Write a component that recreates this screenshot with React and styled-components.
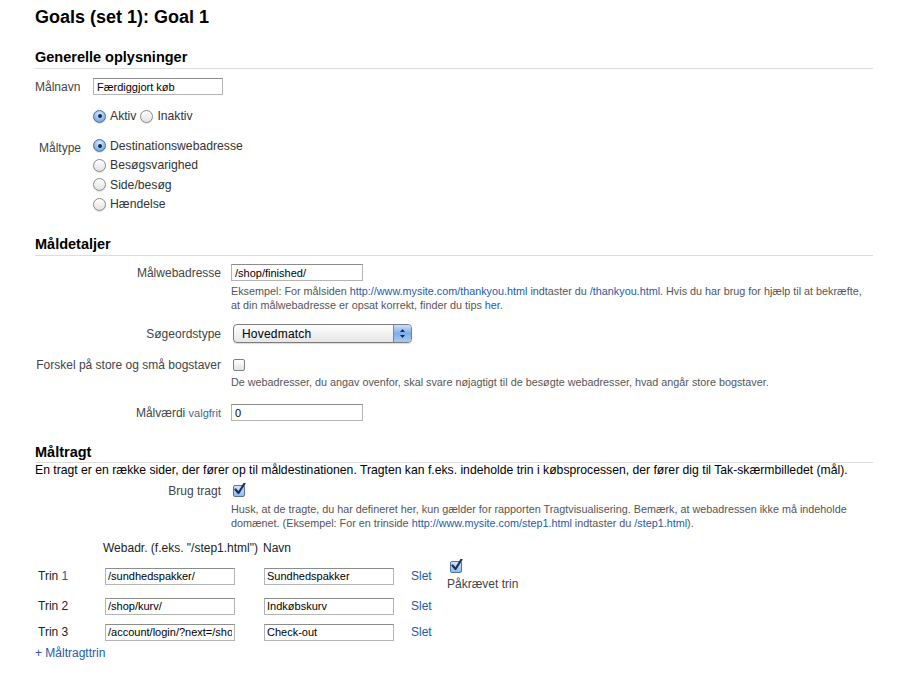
import React from "react";
import styled, { createGlobalStyle } from "styled-components";

const GlobalStyle = createGlobalStyle`
  body {
    margin: 0;
    background: #fff;
    font-family: "Liberation Sans", Arial, Helvetica, sans-serif;
    color: #333;
  }
`;

function Radio({ checked, children }) {
  return (
    <RadioItem>
      <RadioDot $checked={checked} />
      {children}
    </RadioItem>
  );
}

function CheckBox({ checked }) {
  return (
    <Box $checked={checked}>
      {checked && (
        <svg width="14" height="14" viewBox="0 0 14 14">
          <path
            d="M2.5 6.5 L5.5 10 L11.5 0.5"
            fill="none"
            stroke="#1d2f55"
            strokeWidth="2.2"
            strokeLinecap="round"
            strokeLinejoin="round"
          />
        </svg>
      )}
    </Box>
  );
}

const steps = [
  { no: "1", url: "/sundhedspakker/", name: "Sundhedspakker", first: true },
  { no: "2", url: "/shop/kurv/", name: "Indkøbskurv" },
  { no: "3", url: "/account/login/?next=/shop/", name: "Check-out" },
];

export default function App() {
  return (
    <Page>
      <GlobalStyle />
      <Title>Goals (set 1): Goal 1</Title>

      <SectionTitle $mt={20}>Generelle oplysninger</SectionTitle>
      <Row $mt={9} $h={17}>
        <ShortLabel>Målnavn</ShortLabel>
        <TextInput $w={130} defaultValue="Færdiggjort køb" />
      </Row>
      <Row $mt={12} $h={18}>
        <ShortLabel />
        <RadioInline>
          <Radio checked>Aktiv</Radio>
          <Radio>Inaktiv</Radio>
        </RadioInline>
      </Row>
      <TopRow $mt={11}>
        <ShortLabel $pt={5} $shift={4}>Måltype</ShortLabel>
        <RadioList>
          <Radio checked>Destinationswebadresse</Radio>
          <Radio>Besøgsvarighed</Radio>
          <Radio>Side/besøg</Radio>
          <Radio>Hændelse</Radio>
        </RadioList>
      </TopRow>

      <SectionTitle $mt={21}>Måldetaljer</SectionTitle>
      <Row $mt={8} $h={17}>
        <WideLabel>Målwebadresse</WideLabel>
        <TextInput $w={132} defaultValue="/shop/finished/" />
      </Row>
      <Help $mt={3}>
        Eksempel: For målsiden <A>http://www.mysite.com/thankyou.html</A> indtaster du{" "}
        <A>/thankyou.html</A>. Hvis du har brug for hjælp til at bekræfte, at din
        målwebadresse er opsat korrekt, finder du tips <A>her</A>.
      </Help>
      <Row $mt={12} $h={19}>
        <WideLabel>Søgeordstype</WideLabel>
        <Select>
          <SelectText>Hovedmatch</SelectText>
          <SelectButton>
            <svg width="7" height="11" viewBox="0 0 7 11">
              <path d="M3.5 1 L6 4 L1 4 Z" fill="#1b2c4a" />
              <path d="M3.5 10 L6 7 L1 7 Z" fill="#1b2c4a" />
            </svg>
          </SelectButton>
        </Select>
      </Row>
      <Row $mt={13} $h={17}>
        <WideLabel>Forskel på store og små bogstaver</WideLabel>
        <CheckSlot>
          <CheckBox />
        </CheckSlot>
      </Row>
      <Help $mt={2}>
        De webadresser, du angav ovenfor, skal svare nøjagtigt til de besøgte webadresser,
        hvad angår store bogstaver.
      </Help>
      <Row $mt={15} $h={17}>
        <WideLabel>
          Målværdi <Optional>valgfrit</Optional>
        </WideLabel>
        <TextInput $w={132} defaultValue="0" />
      </Row>

      <SectionTitle $mt={22} $pb={1}>Måltragt</SectionTitle>
      <Intro>
        En tragt er en række sider, der fører op til måldestinationen. Tragten kan f.eks.
        indeholde trin i købsprocessen, der fører dig til Tak-skærmbilledet (mål).
      </Intro>
      <Row $mt={6} $h={14}>
        <WideLabel>Brug tragt</WideLabel>
        <CheckSlot>
          <CheckBox checked />
        </CheckSlot>
      </Row>
      <Help $mt={5} $lh={13.5}>
        Husk, at de tragte, du har defineret her, kun gælder for rapporten
        Tragtvisualisering. Bemærk, at webadressen ikke må indeholde domænet. (Eksempel:
        For en trinside <A>http://www.mysite.com/step1.html</A> indtaster du{" "}
        <A>/step1.html</A>).
      </Help>

      <StepHead>
        <span />
        <HeadCell>Webadr. (f.eks. "/step1.html")</HeadCell>
        <HeadCell>Navn</HeadCell>
      </StepHead>
      {steps.map((s) => (
        <StepRow key={s.no} $h={s.first ? 34 : 26}>
          <StepLabel>
            Trin {s.first ? <A>{s.no}</A> : s.no}
          </StepLabel>
          <StepInput defaultValue={s.url} />
          <StepInput defaultValue={s.name} />
          <A>Slet</A>
          {s.first ? (
            <Required>
              <CheckBox checked />
              <RequiredText>Påkrævet trin</RequiredText>
            </Required>
          ) : (
            <span />
          )}
        </StepRow>
      ))}
      <AddLink>+ Måltragttrin</AddLink>
    </Page>
  );
}

const Page = styled.div`
  width: 838px;
  padding: 6px 25px 20px 35px;
  font-size: 12px;
`;

const Title = styled.h1`
  margin: 0;
  font-size: 18px;
  line-height: 22px;
  font-weight: bold;
  color: #000;
`;

const SectionTitle = styled.h2`
  margin: ${(p) => p.$mt}px 0 0;
  padding-bottom: ${(p) => p.$pb ?? 2}px;
  border-bottom: 1px solid #dcdcdc;
  font-size: 14.5px;
  line-height: 18px;
  font-weight: bold;
  color: #000;
`;

const Row = styled.div`
  display: flex;
  align-items: center;
  margin-top: ${(p) => p.$mt}px;
  height: ${(p) => p.$h}px;
`;

const TopRow = styled.div`
  display: flex;
  align-items: flex-start;
  margin-top: ${(p) => p.$mt}px;
`;

const ShortLabel = styled.div`
  width: 46px;
  margin-right: 12px;
  padding-top: ${(p) => p.$pt || 0}px;
  padding-left: ${(p) => p.$shift || 0}px;
  box-sizing: border-box;
  white-space: nowrap;
  color: #444;
  line-height: 14px;
`;

const WideLabel = styled.div`
  width: 186px;
  margin-right: 10px;
  text-align: right;
  white-space: nowrap;
  color: #444;
  line-height: 14px;
`;

const TextInput = styled.input`
  width: ${(p) => p.$w}px;
  height: 17px;
  box-sizing: border-box;
  margin: 0;
  padding: 0 3px;
  border: 1px solid #b4b4b4;
  border-top-color: #8c8c8c;
  font-family: inherit;
  font-size: 11px;
  color: #000;
  outline: none;
`;

const RadioInline = styled.div`
  display: flex;
  gap: 4px;
`;

const RadioList = styled.div`
  display: flex;
  flex-direction: column;
`;

const RadioItem = styled.label`
  display: flex;
  align-items: center;
  height: 19.5px;
  gap: 4px;
  font-size: 12.2px;
  color: #333;
  line-height: 14px;
`;

const RadioDot = styled.span`
  position: relative;
  width: 13px;
  height: 13px;
  box-sizing: border-box;
  border-radius: 50%;
  border: 1px solid ${(p) => (p.$checked ? "#4d6f9c" : "#8a8a8a")};
  background: ${(p) =>
    p.$checked
      ? "radial-gradient(circle at 50% 30%, #d9ecff 0%, #8fbcef 55%, #5e93d6 100%)"
      : "linear-gradient(#ffffff, #e2e2e2)"};
  box-shadow: 0 1px 1px rgba(0, 0, 0, 0.12);

  &::after {
    content: "";
    display: ${(p) => (p.$checked ? "block" : "none")};
    position: absolute;
    left: 3.5px;
    top: 3.5px;
    width: 4px;
    height: 4px;
    border-radius: 50%;
    background: #1b2740;
  }
`;

const Help = styled.div`
  margin-top: ${(p) => p.$mt}px;
  margin-left: 196px;
  font-size: 10.8px;
  line-height: ${(p) => p.$lh || 14}px;
  color: #555;
`;

const A = styled.span`
  color: #1f5aa6;
`;

const Optional = styled.span`
  font-size: 11px;
  color: #3f6a86;
`;

const Select = styled.div`
  display: flex;
  align-items: center;
  width: 179px;
  height: 19px;
  margin-left: 2px;
  box-sizing: border-box;
  border: 1px solid #7d7d7d;
  border-radius: 4px;
  background: linear-gradient(#ffffff, #f2f2f2 50%, #e6e6e6);
  overflow: hidden;
  box-shadow: 0 1px 1px rgba(0, 0, 0, 0.15);
`;

const SelectText = styled.span`
  flex: 1;
  padding-left: 8px;
  font-size: 12px;
  color: #000;
  letter-spacing: 0.2px;
`;

const SelectButton = styled.span`
  display: flex;
  align-items: center;
  justify-content: center;
  width: 17px;
  height: 100%;
  border-left: 1px solid #6d87b0;
  background: linear-gradient(#c9e0fb, #7eaee8 50%, #a7cbf4);
`;

const CheckSlot = styled.div`
  display: flex;
  align-items: center;
  padding-left: 2px;
`;

const Box = styled.span`
  position: relative;
  display: block;
  width: 12px;
  height: 12px;
  box-sizing: border-box;
  border: 1px solid ${(p) => (p.$checked ? "#55749e" : "#7f7f7f")};
  border-radius: 2px;
  background: ${(p) =>
    p.$checked
      ? "linear-gradient(#cfe3fb, #8fbbee)"
      : "linear-gradient(#ffffff, #e4e4e4)"};

  svg {
    position: absolute;
    left: -1px;
    top: -3px;
  }
`;

const Intro = styled.p`
  margin: 0;
  font-size: 12.2px;
  line-height: 15px;
  color: #000;
`;

const StepHead = styled.div`
  display: grid;
  grid-template-columns: 68px 160px 1fr;
  margin-top: 10px;
  line-height: 16px;
  color: #222;
`;

const HeadCell = styled.span`
  white-space: nowrap;
`;

const StepRow = styled.div`
  display: grid;
  grid-template-columns: 70px 159px 147px 36px auto;
  align-items: center;
  height: ${(p) => p.$h}px;
  margin-top: ${(p) => (p.$h > 30 ? 3 : 0)}px;
`;

const StepLabel = styled.span`
  padding-left: 3px;
  color: #222;
`;

const StepInput = styled.input`
  width: 130px;
  height: 17px;
  box-sizing: border-box;
  margin: 0;
  padding: 0 2px;
  border: 1px solid #b4b4b4;
  border-top-color: #8c8c8c;
  font-family: inherit;
  font-size: 11px;
  color: #000;
  outline: none;
`;

const Required = styled.div`
  display: flex;
  flex-direction: column;
  align-items: flex-start;
  gap: 4px;

  & > span:first-child {
    margin-left: 3px;
  }
`;

const RequiredText = styled.span`
  line-height: 14px;
  color: #444;
  white-space: nowrap;
`;

const AddLink = styled.div`
  margin-top: 1px;
  line-height: 14px;
  color: #1f5aa6;
`;
